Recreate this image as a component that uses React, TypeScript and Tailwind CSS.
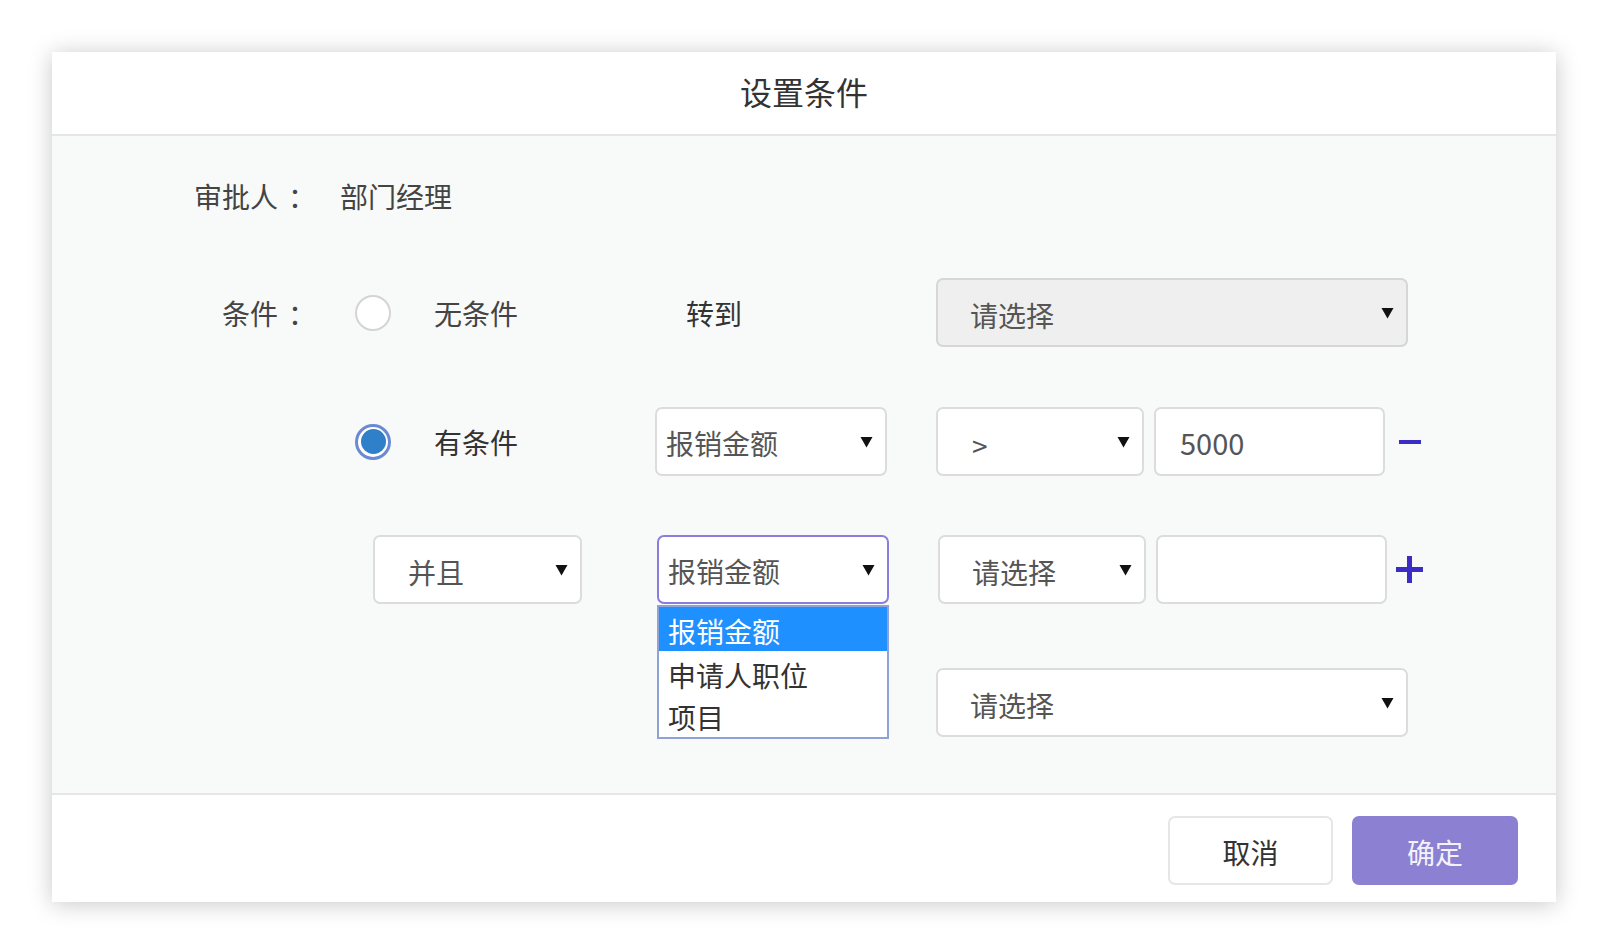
import React from "react";

function Arrow() {
  return (
    <svg width="13" height="12" viewBox="0 0 13 12" className="shrink-0">
      <path d="M0.5 1 H12.5 L6.5 11.5 Z" fill="#111" />
    </svg>
  );
}

function Radio({ checked }: { checked?: boolean }) {
  if (checked) {
    return (
      <div className="w-[36px] h-[36px] rounded-full border-[3px] border-[#6a8ad4] bg-white flex items-center justify-center shrink-0">
        <div className="w-[25px] h-[25px] rounded-full bg-[#2f7fc9]" />
      </div>
    );
  }
  return <div className="w-[36px] h-[36px] rounded-full border-2 border-[#d4d4d4] bg-white shrink-0" />;
}

function Label({ text }: { text: string }) {
  return (
    <div className="w-[254px] flex justify-end">
      <span>{text}</span>
      <span className="w-[28px] pl-[10px] whitespace-nowrap">：</span>
    </div>
  );
}

export default function App() {
  return (
    <div className="w-[1600px] h-[943px] bg-white pt-[52px] pl-[52px] font-['Noto_Sans_CJK_SC',sans-serif] text-[28px] text-[#444] leading-none">
      <div className="w-[1504px] h-[850px] flex flex-col bg-white shadow-[0_2px_22px_rgba(0,0,0,0.22)]">
        {/* Header */}
        <div className="h-[84px] shrink-0 flex items-center justify-center border-b-2 border-[#e6e6e6] pb-[5px] text-[32px] text-[#333]">
          设置条件
        </div>

        {/* Body */}
        <div className="h-[657px] shrink-0 bg-[#f8f9f9] pt-[40px] flex flex-col">
          {/* 审批人 */}
          <div className="h-[40px] flex items-center">
            <Label text="审批人" />
            <div className="ml-[34px]">部门经理</div>
          </div>

          {/* 条件 row 1 */}
          <div className="mt-[62px] h-[69px] flex items-center">
            <Label text="条件" />
            <div className="ml-[49px]">
              <Radio />
            </div>
            <div className="ml-[43px] w-[252px]">无条件</div>
            <div className="w-[250px] text-[#333]">转到</div>
            <div className="w-[472px] h-full rounded-[7px] border-2 border-[#d6d6d6] bg-[#efefef] flex items-center justify-between pl-[32px] pr-[12px] text-[#555]">
              <span className="pt-[4px]">请选择</span>
              <Arrow />
            </div>
          </div>

          {/* 条件 row 2 */}
          <div className="mt-[60px] h-[69px] flex items-center">
            <div className="w-[254px]" />
            <div className="ml-[49px]">
              <Radio checked />
            </div>
            <div className="ml-[43px] w-[221px] text-[#333]">有条件</div>
            <div className="w-[232px] h-full rounded-[7px] border-2 border-[#dcdcdc] bg-white flex items-center justify-between pl-[9px] pr-[12px] text-[#555]">
              <span className="pt-[2px]">报销金额</span>
              <Arrow />
            </div>
            <div className="ml-[49px] w-[208px] h-full rounded-[7px] border-2 border-[#dcdcdc] bg-white flex items-center justify-between pl-[34px] pr-[12px] text-[#555]">
              <span className="pt-[6px]">&gt;</span>
              <Arrow />
            </div>
            <div className="ml-[10px] w-[231px] h-full rounded-[7px] border-2 border-[#dcdcdc] bg-white flex items-center pl-[24px] text-[29px] text-[#555]">
              <span className="pt-[1px]">5000</span>
            </div>
            <div className="ml-[14px] w-[22px] h-[4px] bg-[#3a2cc4]" />
          </div>

          {/* 条件 row 3 */}
          <div className="mt-[59px] h-[69px] flex items-center">
            <div className="w-[321px]" />
            <div className="w-[209px] h-full rounded-[7px] border-2 border-[#dcdcdc] bg-white flex items-center justify-between pl-[33px] pr-[12px] text-[#555]">
              <span className="pt-[4px]">并且</span>
              <Arrow />
            </div>
            <div className="ml-[75px] w-[232px] h-full relative">
              <div className="w-full h-full rounded-[7px] border-2 border-[#8b7de0] bg-white flex items-center justify-between pl-[9px] pr-[12px] text-[#555]">
                <span className="pt-[2px]">报销金额</span>
                <Arrow />
              </div>
              <div className="absolute left-0 top-full mt-[1px] w-full border-2 border-[#8fa2d6] bg-white flex flex-col z-10">
                <div className="h-[44px] bg-[#1e90ff] text-white flex items-center pl-[9px]">
                  <span className="pt-[4px]">报销金额</span>
                </div>
                <div className="h-[43px] flex items-center pl-[9px] text-[#333]">
                  <span className="pt-[4px]">申请人职位</span>
                </div>
                <div className="h-[43px] flex items-center pl-[9px] text-[#333]">
                  <span className="pt-[2px]">项目</span>
                </div>
              </div>
            </div>
            <div className="ml-[49px] w-[208px] h-full rounded-[7px] border-2 border-[#dcdcdc] bg-white flex items-center justify-between pl-[32px] pr-[12px] text-[#555]">
              <span className="pt-[4px]">请选择</span>
              <Arrow />
            </div>
            <div className="ml-[10px] w-[231px] h-full rounded-[7px] border-2 border-[#dcdcdc] bg-white" />
            <div className="ml-[9px] w-[27px] h-[27px] relative shrink-0">
              <div className="absolute left-0 top-[11px] w-[27px] h-[5px] bg-[#3a2cc4]" />
              <div className="absolute top-0 left-[11px] w-[5px] h-[27px] bg-[#3a2cc4]" />
            </div>
          </div>

          {/* bottom select */}
          <div className="mt-[64px] h-[69px] flex items-center">
            <div className="w-[884px]" />
            <div className="w-[472px] h-full rounded-[7px] border-2 border-[#dcdcdc] bg-white flex items-center justify-between pl-[32px] pr-[12px] text-[#555]">
              <span className="pt-[4px]">请选择</span>
              <Arrow />
            </div>
          </div>
        </div>

        {/* Footer */}
        <div className="h-[109px] shrink-0 border-t-2 border-[#e6e6e6] bg-white flex justify-end items-start pt-[21px] pr-[38px] gap-[19px]">
          <button className="w-[165px] h-[69px] rounded-[7px] border-2 border-[#e6e6e6] bg-white text-[#333] text-[28px] flex items-center justify-center">
            <span className="pt-[2px]">取消</span>
          </button>
          <button className="w-[166px] h-[69px] rounded-[7px] bg-[#8c80d2] text-[#f3f2fb] text-[28px] flex items-center justify-center">
            <span className="pt-[2px]">确定</span>
          </button>
        </div>
      </div>
    </div>
  );
}
